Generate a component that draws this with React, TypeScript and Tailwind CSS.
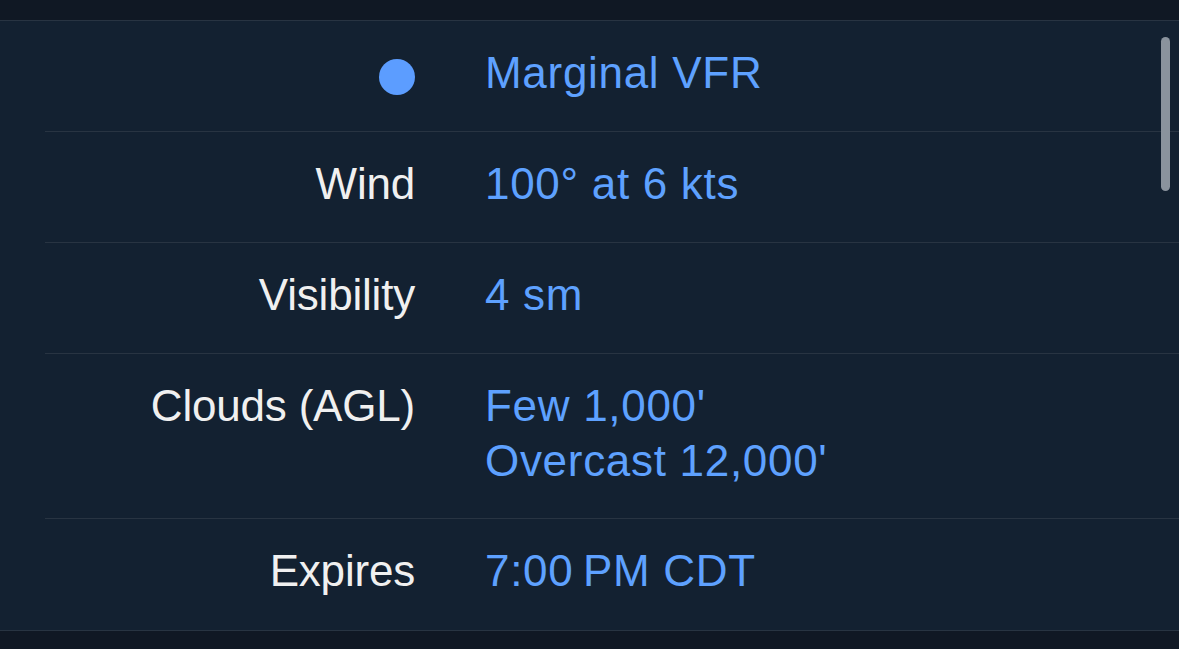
import React from "react";

const rows: { label: React.ReactNode; values: string[]; pb: string }[] = [
  { label: <span className="inline-block w-[36px] h-[36px] rounded-full bg-[#5c9dff] align-middle mt-[2px]" />, values: ["Marginal VFR"], pb: "pb-[31px]" },
  { label: "Wind", values: ["100° at 6 kts"], pb: "pb-[31px]" },
  { label: "Visibility", values: ["4 sm"], pb: "pb-[31px]" },
  { label: "Clouds (AGL)", values: ["Few 1,000'", "Overcast 12,000'"], pb: "pb-[30px]" },
  { label: "Expires", values: ["7:00\u2009PM CDT"], pb: "pb-[32px]" },
];

export default function App() {
  return (
    <div
      className="w-[1179px] h-[649px] bg-[#101824] overflow-hidden relative"
      style={{ fontFamily: '"Liberation Sans", Arial, sans-serif' }}
    >
      <div className="h-[21px] border-b border-[#283442]" />
      <div className="bg-[#132131] pl-[45px] border-b border-[#283442]">
        {rows.map((r, i) => (
          <div
            key={i}
            className={`flex pt-[24px] ${r.pb} text-[44px] leading-[55px] ${i < rows.length - 1 ? "border-b border-[#283442]" : ""}`}
          >
            <div className="w-[370px] text-right text-[#f0f0f0] shrink-0 tracking-[-0.2px]">{r.label}</div>
            <div className="ml-[70px] text-[#5ea1ff] tracking-[0.7px]">
              {r.values.map((v, j) => (
                <div key={j}>{v}</div>
              ))}
            </div>
          </div>
        ))}
      </div>
      <div className="absolute left-[1161px] top-[37px] w-[9px] h-[154px] rounded-full bg-[#8a939d]" />
    </div>
  );
}
